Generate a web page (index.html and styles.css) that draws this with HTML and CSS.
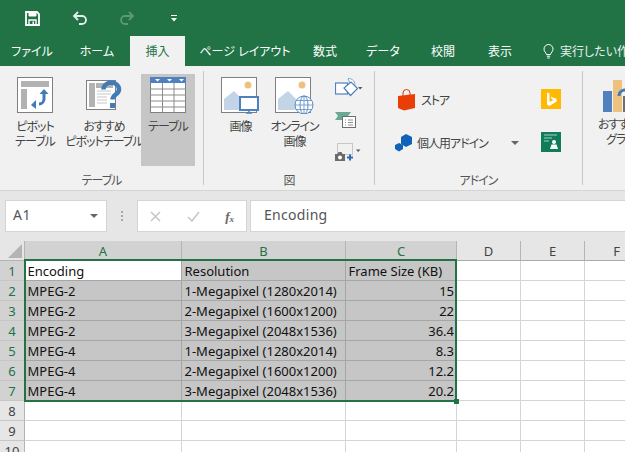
FILE: index.html
```html
<!DOCTYPE html>
<html lang="ja">
<head>
<meta charset="utf-8">
<title>Excel</title>
<link rel="stylesheet" href="styles.css">
</head>
<body>
<div class="app">
  <header class="qat">
    <svg class="qat-icon save" width="15" height="15" viewBox="0 0 15 15"><path d="M1 1h11l2 2v11H1z" fill="none" stroke="#fff" stroke-width="1.800"/><path d="M4 1v4h7V1" fill="#fff" stroke="#fff" stroke-width="1"/><path d="M4 14V9h7v5" fill="none" stroke="#fff" stroke-width="1.400"/><rect x="7.500" y="10.500" width="1.500" height="3" fill="#fff"/></svg>
    <svg class="qat-icon undo" width="16" height="14" viewBox="0 0 16 14"><path d="M2 5h8a4 4 0 0 1 0 8H7" fill="none" stroke="#e6eee9" stroke-width="1.800"/><path d="M6 1 2 5l4 4" fill="none" stroke="#e6eee9" stroke-width="1.800"/></svg>
    <svg class="qat-icon redo" width="16" height="14" viewBox="0 0 16 14"><path d="M14 5H6a4 4 0 0 0 0 8h3" fill="none" stroke="#5c9a7a" stroke-width="1.800"/><path d="M10 1l4 4-4 4" fill="none" stroke="#5c9a7a" stroke-width="1.800"/></svg>
    <svg class="qat-icon more" width="6" height="7" viewBox="0 0 6 7"><rect y="0" width="6" height="1" fill="#fff"/><path d="M0 3h6L3 6.500z" fill="#fff"/></svg>
  </header>

  <nav class="tabs">
    <span class="tab w-file">ファイル</span>
    <span class="tab w-home">ホーム</span>
    <span class="tab tab-active">挿入</span>
    <span class="tab w-page">ページ レイアウト</span>
    <span class="tab w-formula">数式</span>
    <span class="tab w-data">データ</span>
    <span class="tab w-review">校閲</span>
    <span class="tab w-view">表示</span>
    <span class="tell">
      <svg width="11" height="15" viewBox="0 0 11 15"><path d="M3.500 10.500C3 8.500 1 7.500 1 5a4.500 4.500 0 0 1 9 0c0 2.500-2 3.500-2.500 5.500zM3.800 12.200h3.400M4.300 14h2.400" fill="none" stroke="#fff" stroke-width="1"/></svg>
      <span>実行したい作業を入力してください</span>
    </span>
  </nav>

  <section class="ribbon">
    <div class="group g-table">
      <div class="group-body">
        <div class="big b-pivot">
          <svg width="37" height="37" viewBox="0 0 37 37"><rect x=".5" y=".5" width="35" height="35" fill="#fff" stroke="#7f7f7f"/><rect x="4" y="4" width="28" height="6" fill="#b2b2b2"/><rect x="4" y="12" width="6" height="20" fill="#b2b2b2"/><path d="M27 15v7a5 5 0 0 1-5 5" fill="none" stroke="#3f7cb8" stroke-width="3"/><path d="M27 12l-4.500 5h9z" fill="#3f7cb8"/><path d="M14 28l5-5v9z" fill="#3f7cb8"/></svg>
          <span class="cap nowrap">ピボット<br>テーブル</span>
        </div>
        <div class="big b-reco">
          <svg width="37" height="37" viewBox="0 0 37 37"><rect x=".5" y="3.500" width="29" height="29" fill="#fff" stroke="#7f7f7f"/><rect x="3" y="6" width="6" height="24" fill="#b2b2b2"/><rect x="10" y="6" width="17" height="5" fill="#b2b2b2"/><path d="M11 14h14M11 17h14M11 20h10M11 23h10M11 26h10" stroke="#c6c6c6"/><path d="M17.500 12.500c0-9 15.500-9 15.500 0 0 5-6.500 5-6.500 10" fill="none" stroke="#3f7cb8" stroke-width="4.500"/><rect x="24" y="26" width="5" height="5" fill="#3f7cb8"/></svg>
          <span class="cap nowrap">おすすめ<br>ピボットテーブル</span>
        </div>
        <div class="big b-tbl">
          <svg width="37" height="37" viewBox="0 0 37 37"><rect x=".5" y=".5" width="35" height="35" fill="#fff" stroke="#7f7f7f"/><rect width="36" height="6" fill="#4e81bd"/><path d="M12.500 6v30M24 6v30M0 12h36M0 18h36M0 24h36M0 30h36" stroke="#8c8c8c"/><path d="M5 2h5L7.500 4.500zM17 2h5l-2.500 2.500zM29 2h5l-2.500 2.500z" fill="#fff"/></svg>
          <span class="cap">テーブル</span>
        </div>
      </div>
      <div class="group-label">テーブル</div>
    </div>

    <div class="group g-fig">
      <div class="group-body">
        <div class="big b-pic">
          <svg width="39" height="37" viewBox="0 0 39 37"><rect x=".5" y=".5" width="35" height="35" fill="#fff" stroke="#7f7f7f"/><circle cx="27" cy="8" r="3.500" fill="#eec27e"/><path d="M3 33V22l10-8 9 9v10z" fill="#c3d4e7"/><rect x="19" y="20" width="18" height="13" fill="#fff" stroke="#4e81bd" stroke-width="2"/><path d="M25 36h6M28 33v3" stroke="#4e81bd" stroke-width="1.500"/></svg>
          <span class="cap">画像</span>
        </div>
        <div class="big b-online">
          <svg width="39" height="37" viewBox="0 0 39 37"><rect x=".5" y=".5" width="35" height="35" fill="#fff" stroke="#7f7f7f"/><circle cx="27" cy="8" r="3.500" fill="#eec27e"/><path d="M3 33V22l10-8 9 9v10z" fill="#c3d4e7"/><circle cx="29" cy="28" r="9" fill="#fff" stroke="#5a8dc4"/><ellipse cx="29" cy="28" rx="4" ry="9" fill="none" stroke="#5a8dc4"/><path d="M29 19v18M20 28h18M21.500 23.500h15M21.500 32.500h15" stroke="#5a8dc4" stroke-width=".8"/></svg>
          <span class="cap nowrap">オンライン<br>画像</span>
        </div>
        <div class="small-col">
          <div class="small-item">
            <svg width="28" height="21" viewBox="0 0 28 21"><rect x=".5" y="5" width="12" height="11" fill="#fff" stroke="#4e81bd" stroke-width="1.200"/><path d="M13 .6a6 6 0 0 1 6.500 8l-.5.7-4-4z" fill="#fff" stroke="#7fa6d0"/><path d="M9 10l7-6 6.500 6.500-7 7z" fill="#fff" stroke="#4e81bd" stroke-width="1.200"/><path d="M23 9h4.500L25.200 11.500z" fill="#595959"/></svg>
          </div>
          <div class="small-item">
            <svg width="21" height="16" viewBox="0 0 21 16"><path d="M0 0h16l-3 4 3 4H0l3-4z" fill="#6aa896"/><rect x="7.500" y="4.500" width="13" height="11" fill="#fff" stroke="#6e6e6e"/><path d="M10 8h1M10 10.500h1M10 13h1M13 8h5M13 10.500h5M13 13h5" stroke="#8c8c8c"/></svg>
          </div>
          <div class="small-item">
            <svg width="26" height="18" viewBox="0 0 26 18"><rect x="2.500" y=".5" width="15" height="11" fill="none" stroke="#9a9a9a" stroke-dasharray="1 1"/><path d="M0 11h2.500l1-2h3l1 2H10v7H0z" fill="#6a6a6a"/><circle cx="5" cy="14.500" r="2" fill="#fff"/><path d="M12 14.500h6M15 11.500v6" stroke="#2b6fb3" stroke-width="2"/><path d="M21 6.500h4.500L23.200 9z" fill="#595959"/></svg>
          </div>
        </div>
      </div>
      <div class="group-label">図</div>
    </div>

    <div class="group g-addin">
      <div class="group-body addin-body">
        <div class="addin-col">
          <div class="addin-row store">
            <svg width="18" height="22" viewBox="0 0 18 22"><path d="M5 7V4a3.500 3.500 0 0 1 7 0v3" fill="none" stroke="#d83b01" stroke-width="1"/><path d="M0 7l17-2v14l-11 2.500L0 19z" fill="#ea3e07"/></svg>
            <span>ストア</span>
          </div>
          <div class="addin-row mine">
            <svg width="18" height="18" viewBox="0 0 18 18"><path d="M11 0l6 3v7l-6 3-5-3V3z" fill="#0f62b8"/><path d="M4 9l4 2v4l-4 2.500L0 15v-4z" fill="#0f62b8"/></svg>
            <span class="mine-text">個人用アドイン</span>
            <i class="caret"></i>
          </div>
        </div>
        <div class="tile-col">
          <svg width="20" height="20" viewBox="0 0 20 20"><rect width="20" height="20" fill="#ffb900"/><path d="M6 3.500l2.500 1v8.500l4-2-1.800-1-1-2.500 6 2.500v2.500L8.500 17 6 15.500z" fill="#fff"/></svg>
          <svg width="20" height="20" viewBox="0 0 20 20"><rect width="20" height="20" fill="#107c5a"/><path d="M3 3h13M3 6h8M3 9h5" stroke="#9fd0bd" stroke-width="1.200"/><circle cx="13" cy="10" r="2" fill="#fff"/><path d="M9 17l1.500-4.500h5L17 17z" fill="#fff"/></svg>
        </div>
      </div>
      <div class="group-label">アドイン</div>
    </div>

    <div class="group g-chart">
      <div class="chart-item">
        <svg width="22" height="32" viewBox="0 0 22 32"><rect x="0" y="11" width="9" height="21" fill="#4e81bd"/><rect x="10" y="0" width="9" height="32" fill="#eec27e"/><rect x="20" y="16" width="2" height="16" fill="#6e6e6e"/><path d="M16 16c0-6 6-6 6-6" fill="none" stroke="#3f7cb8" stroke-width="3"/></svg>
        <span class="cap nowrap">おすすめ<br><span class="chart-second">グラフ</span></span>
      </div>
    </div>
  </section>

  <section class="fbar">
    <div class="namebox"><span class="nametext">A1</span><i class="caret"></i></div>
    <div class="grip"><b></b><b></b><b></b></div>
    <div class="fbtns">
      <svg width="11" height="11" viewBox="0 0 11 11"><path d="M1 1l9 9M10 1l-9 9" stroke="#c6c6c6" stroke-width="1.500"/></svg>
      <svg width="13" height="11" viewBox="0 0 13 11"><path d="M1 6l4 4 7-9" fill="none" stroke="#c6c6c6" stroke-width="1.500"/></svg>
      <span class="fx">f<sub>x</sub></span>
    </div>
    <div class="finput">Encoding</div>
  </section>

  <main class="sheet">
    <div class="grid">
      <div class="hd corner"><svg width="14" height="14" viewBox="0 0 14 14"><path d="M14 0v14H0z" fill="#b4b4b4"/></svg></div>
      <div class="hd col on">A</div><div class="hd col on">B</div><div class="hd col on">C</div>
      <div class="hd col">D</div><div class="hd col">E</div><div class="hd col">F</div>

      <div class="hd row on">1</div><div class="c a1">Encoding</div><div class="c s">Resolution</div><div class="c s">Frame Size (KB)</div><div class="c"></div><div class="c"></div><div class="c"></div>
      <div class="hd row on">2</div><div class="c s">MPEG-2</div><div class="c s">1-Megapixel (1280x2014)</div><div class="c s n">15</div><div class="c"></div><div class="c"></div><div class="c"></div>
      <div class="hd row on">3</div><div class="c s">MPEG-2</div><div class="c s">2-Megapixel (1600x1200)</div><div class="c s n">22</div><div class="c"></div><div class="c"></div><div class="c"></div>
      <div class="hd row on">4</div><div class="c s">MPEG-2</div><div class="c s">3-Megapixel (2048x1536)</div><div class="c s n">36.4</div><div class="c"></div><div class="c"></div><div class="c"></div>
      <div class="hd row on">5</div><div class="c s">MPEG-4</div><div class="c s">1-Megapixel (1280x2014)</div><div class="c s n">8.3</div><div class="c"></div><div class="c"></div><div class="c"></div>
      <div class="hd row on">6</div><div class="c s">MPEG-4</div><div class="c s">2-Megapixel (1600x1200)</div><div class="c s n">12.2</div><div class="c"></div><div class="c"></div><div class="c"></div>
      <div class="hd row on">7</div><div class="c s">MPEG-4</div><div class="c s">3-Megapixel (2048x1536)</div><div class="c s n">20.2</div><div class="c"></div><div class="c"></div><div class="c"></div>
      <div class="hd row">8</div><div class="c"></div><div class="c"></div><div class="c"></div><div class="c"></div><div class="c"></div><div class="c"></div>
      <div class="hd row">9</div><div class="c"></div><div class="c"></div><div class="c"></div><div class="c"></div><div class="c"></div><div class="c"></div>
      <div class="hd row">10</div><div class="c"></div><div class="c"></div><div class="c"></div><div class="c"></div><div class="c"></div><div class="c"></div>
    </div>
    <div class="selection"><i class="handle"></i></div>
  </main>
</div>
</body>
</html>
```

FILE: styles.css
```css
* { box-sizing: border-box; }
html, body { margin: 0; height: 100%; overflow: hidden; }
body {
  font-family: "Noto Sans", "Noto Sans CJK JP", sans-serif;
  font-feature-settings: "palt";
  background: #e6e6e6;
  color: #444;
}
.app { width: 625px; height: 452px; overflow: hidden; display: flex; flex-direction: column; }

/* Title / quick access */
.qat { height: 36px; background: #217346; display: flex; align-items: center; flex: none; }
.qat-icon { flex: none; }
.save { margin: 0 0 0 25px; }
.undo { margin: -1px 0 0 32px; }
.redo { margin: -1px 0 0 31px; }
.more { margin: 1px 0 0 36px; }

/* Tabs */
.tabs { height: 30px; background: #217346; display: flex; flex: none; color: #fff; font-size: 12px; white-space: nowrap; }
.tab { display: flex; align-items: center; justify-content: center; flex: none; }
.w-file { width: 64px; }
.w-home { width: 66px; }
.tab-active { width: 55px; background: #f1f1f1; color: #217346; }
.w-page { width: 120px; }
.w-formula { width: 40px; }
.w-data { width: 76px; }
.w-review { width: 44px; }
.w-view { width: 70px; }
.tell { display: flex; align-items: center; gap: 6px; margin-left: 8px; color: #e9f1ec; }

/* Ribbon */
.ribbon { height: 125px; flex: none; background: #f1f1f1; border-bottom: 1px solid #d4d4d4; display: flex; padding-top: 5px; }
.group { flex: none; display: flex; flex-direction: column; border-right: 1px solid #c8c8c8; height: 114px; }
.group-body { height: 100px; flex: none; display: flex; }
.group-label { height: 14px; text-align: center; font-size: 12px; line-height: 20px; color: #555; letter-spacing: -1px; }
.g-table { width: 204px; }
.g-fig { width: 171px; }
.g-addin { width: 208px; }
.g-chart { border-right: 0; flex: 1; overflow: hidden; }

.big { display: flex; flex-direction: column; align-items: center; flex: none; padding-top: 6px; }
.cap { font-size: 12px; line-height: 15px; text-align: center; color: #444; margin-top: 5px; letter-spacing: -1px; }
.nowrap { white-space: nowrap; }
.b-pivot { width: 36px; margin-left: 17px; }
.b-reco { width: 36px; margin-left: 33px; }
.b-tbl { width: 54px; margin: 3px 0 5px 19px; padding-top: 3px; background: #c6c6c6; }
.b-pic { width: 39px; margin-left: 17px; }
.b-online { width: 39px; margin-left: 15px; }
.small-col { display: flex; flex-direction: column; margin-left: 21px; padding-top: 1px; }
.small-item { height: 32px; display: flex; align-items: center; }

.addin-body { padding-top: 18px; }
.addin-col { width: 140px; margin-left: 20px; display: flex; flex-direction: column; gap: 21px; }
.addin-row { display: flex; align-items: center; font-size: 12px; color: #444; height: 22px; white-space: nowrap; letter-spacing: -1px; }
.store { gap: 5px; margin-left: 3px; }
.mine { gap: 4px; }
.mine-text { width: 72px; }
.caret { display: block; width: 0; height: 0; border: 4px solid transparent; border-top-color: #666; border-bottom-width: 0; flex: none; }
.mine .caret { margin-left: 18px; }
.tile-col { display: flex; flex-direction: column; gap: 23px; margin-left: 6px; }

.chart-item { display: flex; flex-direction: column; padding: 9px 0 0 20px; width: 70px; }
.chart-item .cap { text-align: left; margin-left: -5px; margin-top: 5px; }
.chart-second { margin-left: 8px; }

/* Formula bar */
.fbar { height: 50px; flex: none; background: #e6e6e6; display: flex; padding: 9px 0 9px 5px; align-items: stretch; }
.namebox { width: 102px; background: #fff; border: 1px solid #d4d4d4; display: flex; align-items: center; justify-content: space-between; padding: 0 8px 0 7px; font-size: 14px; letter-spacing: .5px; color: #555; }
.nametext { margin-bottom: 3px; }
.grip { width: 30px; display: flex; flex-direction: column; align-items: center; justify-content: center; gap: 2px; }
.grip b { width: 2px; height: 2px; background: #a6a6a6; }
.fbtns { width: 110px; background: #fff; border: 1px solid #d4d4d4; display: flex; align-items: center; padding: 0 12px; justify-content: space-between; }
.fx { font-family: "Liberation Serif", serif; font-style: italic; font-weight: 700; font-size: 13px; color: #666; line-height: 1; }
.fx sub { font-size: 9px; vertical-align: -1px; line-height: 0; }
.finput { flex: 1; margin-left: 3px; background: #fff; border: 1px solid #d4d4d4; border-right: 0; padding-left: 13px; font-size: 14px; letter-spacing: .3px; line-height: 27px; color: #555; }

/* Sheet */
.sheet { position: relative; flex: 1; min-height: 0; overflow: hidden; background: #fff; }
.grid { display: grid; grid-template-columns: 25px 157px 164px 111px 64px 64px 64px; grid-auto-rows: 20px; width: 649px; background: #fff; }
.hd { background: #e6e6e6; font-size: 13px; display: flex; align-items: center; justify-content: center; color: #444; }
.corner { justify-content: flex-end; align-items: flex-end; padding: 0 2px 2px 0; border-right: 1px solid #b4b4b4; border-bottom: 1px solid #b4b4b4; }
.col { border-right: 1px solid #b4b4b4; border-bottom: 1px solid #ababab; }
.row { border-right: 1px solid #b4b4b4; border-bottom: 1px solid #c6c6c6; }
.hd.on { background: #d2d2d2; color: #217346; }
.c { font-size: 13px; line-height: 21px; padding: 0 2px 0 2.500px; color: #111; border-right: 1px solid #d4d4d4; border-bottom: 1px solid #d4d4d4; white-space: nowrap; overflow: hidden; background: #fff; }
.s { background: #c6c6c6; border-color: #a6a6a6; }
.a1 { background: #fff; border-color: #a6a6a6; }
.n { text-align: right; }
.selection { position: absolute; left: 24px; top: 18px; width: 433px; height: 143px; border: 2px solid #217346; pointer-events: none; }
.handle { position: absolute; right: -4px; bottom: -4px; width: 5px; height: 5px; background: #217346; border: 0; }
```
